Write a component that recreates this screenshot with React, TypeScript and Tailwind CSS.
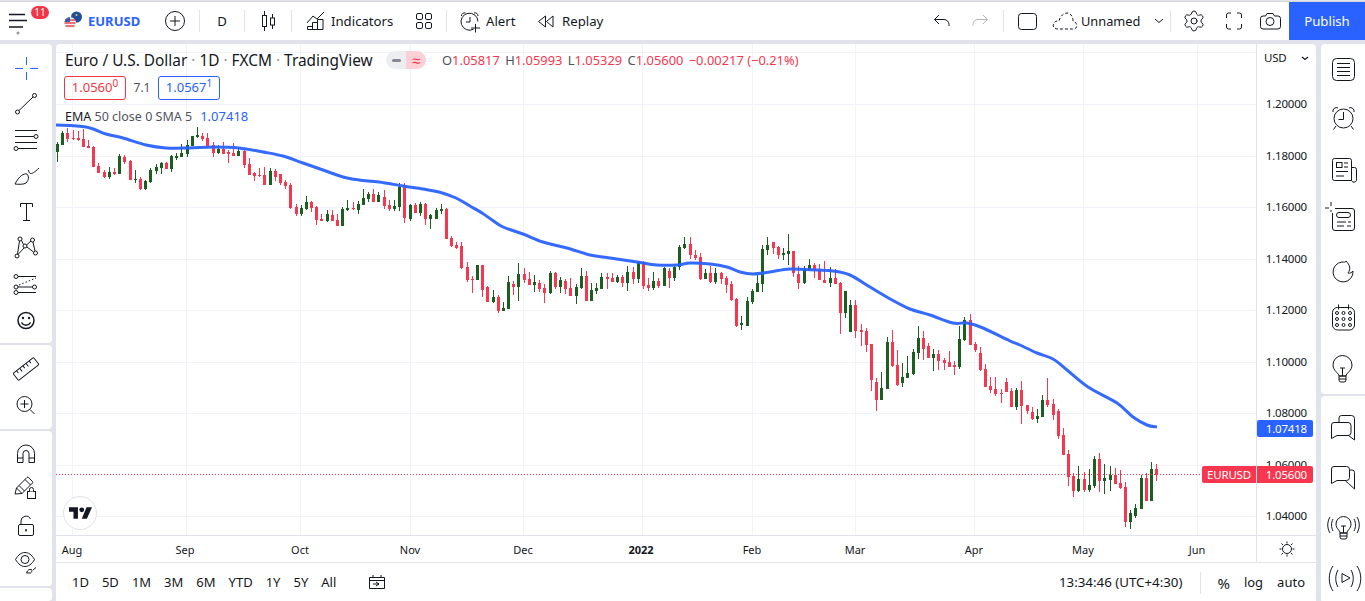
import type { ReactNode } from 'react'
import { Settings } from 'lucide-react'

// [green?, bodyTop, bodyBottom, wickTop, wickBottom], zoomed pixel units (3x)
type C = [number, number, number, number, number]

const seg1: C[] = [
  [1,72,96,66,126],[1,39,75,33,75],[0,39,57,24,66],[0,54,58,30,60],[0,54,60,33,63],[0,57,81,27,81],[0,78,84,60,84],[0,81,141,78,141],
  [0,138,159,129,159],[0,156,171,150,174],[1,156,171,141,177],[0,156,162,144,165],[1,108,162,102,162],[0,111,126,105,132],[0,123,180,120,180],[1,177,180,150,189],
  [0,177,207,171,210],[1,183,207,180,210],[1,150,186,144,189],[1,141,153,132,162],[1,129,144,126,162],[0,129,147,126,147],[1,108,147,105,156],[1,108,114,99,120],
  [1,99,111,72,111],[1,75,102,60,111],[1,48,78,48,78],[1,45,51,21,54],[0,48,57,39,63],[0,54,78,39,78],[0,75,99,66,111],[1,87,99,75,102],
  [0,87,102,66,102],[0,96,102,90,129],[0,99,108,69,108],[1,93,108,81,108],[0,93,135,87,144],[0,132,165,114,165],[0,159,168,156,183],[0,165,168,144,171],
  [0,165,195,141,195],[1,153,195,144,195],[0,153,171,147,183],[0,162,189,162,195],[0,186,198,180,207],[0,195,264,189,267],[0,261,282,252,288],[1,264,282,255,288],
  [1,246,267,228,270],[0,246,264,243,276],[0,261,300,258,315],[0,297,303,282,303],[1,282,303,270,306],[0,285,303,270,303],[0,300,318,282,318],[1,267,318,261,318],
  [1,264,270,240,273],[0,264,267,246,270],[1,252,270,243,282],[1,234,255,207,255],[1,222,237,216,246],[0,222,246,207,246],[1,225,246,216,246],[0,231,258,210,267],
  [0,255,267,240,273],[1,258,267,240,273],[1,201,261,189,273],[0,195,294,189,309],[1,255,297,252,303],[0,255,279,249,279],[1,252,279,246,288],[0,252,297,249,315],
  [1,285,297,282,327],[1,270,297,264,297],[1,267,273,252,282],[0,267,357,264,357],
]
const seg2: C[] = [
  [0,54,78,48,81],[0,75,84,66,87],[0,78,144,66,147],[0,141,180,126,186],[0,177,180,168,219],[1,135,180,135,180],[0,135,210,135,231],[0,201,246,198,246],
  [1,231,246,210,249],[0,231,273,225,279],[1,264,273,246,273],[1,186,267,168,267],[0,192,201,183,225],[1,162,201,129,243],[0,162,180,144,189],[0,177,195,156,195],
  [1,186,195,165,216],[0,189,207,180,216],[0,204,219,192,249],[1,159,219,153,222],[0,159,201,156,207],[1,180,201,171,219],[0,183,207,177,222],[0,204,228,174,228],
  [1,201,228,192,252],[1,168,204,144,207],[0,168,243,153,243],[1,210,243,189,243],[1,204,213,189,222],[1,171,207,159,207],[0,171,177,159,207],[0,174,186,159,186],
  [1,171,186,165,189],[0,171,189,165,201],[1,156,189,138,213],[0,156,177,141,192],[1,126,177,123,189],[0,126,198,123,207],[0,195,204,174,213],[1,183,204,156,210],
  [0,183,198,174,204],[1,144,198,141,198],[0,153,174,144,204],[1,141,174,135,183],[1,81,141,75,150],[1,72,84,51,87],[0,72,105,51,117],[0,105,114,90,120],
  [0,111,177,99,180],[1,159,177,147,177],[0,159,186,138,189],[1,159,186,144,192],[0,159,177,156,192],[0,174,195,168,219],[0,192,240,183,243],[0,237,318,234,321],
  [1,309,315,288,330],[1,243,318,231,318],[1,213,246,207,252],[1,189,216,165,216],[1,87,192,75,216],[1,75,90,51,105],[0,66,84,66,102],[0,81,105,78,117],
  [1,99,105,84,120],[1,93,102,42,135],[0,93,159,93,171],[0,162,189,138,207],[1,147,189,138,192],[1,135,150,117,153],[0,135,150,129,174],[0,147,180,132,180],
  [0,180,189,123,189],[1,174,189,141,201],[0,174,192,147,192],[0,189,279,186,342],[1,213,279,213,294],
]
const seg3: C[] = [
  [1,15,96,0,96],[0,15,93,0,114],[0,90,96,72,138],[0,93,135,84,156],[0,132,240,132,273],[0,246,300,234,333],[1,264,300,216,300],[1,126,267,111,267],
  [0,126,198,90,201],[0,195,255,150,258],[1,231,249,189,261],[1,219,234,168,234],[1,156,222,147,225],[1,114,159,78,177],[0,114,147,93,180],[0,138,174,129,174],
  [1,162,174,147,213],[0,162,183,150,210],[0,180,189,174,210],[0,186,201,153,201],[0,195,201,183,225],[1,117,201,78,207],[1,60,120,51,123],[0,60,135,42,135],
  [0,132,150,126,156],[0,159,210,141,213],[0,207,261,192,261],[0,258,270,231,279],[0,267,282,231,288],[0,279,282,267,309],[0,246,276,234,276],[0,273,321,264,321],
  [1,270,321,264,330],[0,270,318,243,372],[0,315,333,315,342],[0,336,357,321,360],[1,348,357,327,369],[1,300,351,285,351],[0,300,315,234,321],[0,312,345,297,360],
  [0,333,408,327,417],[0,405,465,384,465],[0,462,531,450,558],[0,528,573,519,591],[1,537,573,498,576],[0,537,570,516,576],[1,555,570,507,576],[1,477,558,468,564],
  [0,477,543,459,576],[1,534,543,492,582],[1,525,540,498,573],[0,525,552,504,552],[0,549,564,510,567],[0,561,666,546,681],[1,639,666,630,687],[1,624,648,612,654],
  [1,534,627,525,627],[0,534,603,519,603],[1,507,603,486,603],[0,507,525,492,543],
]

const candles = [
  ...seg1.map(c => ({ c, y0: 120 })),
  ...seg2.map(c => ({ c, y0: 220 })),
  ...seg3.map(c => ({ c, y0: 300 })),
]

const emaPts = [[56,125],[86,127],[106,134],[123,138],[146,145],[166,148],[189,148],[213,147],[239,148],[263,152],[283,156],[303,163],[323,170],[343,177],[359,180],[379,182],[403,186],[423,189],[439,192],[456,198],[470,206],[482,213],[492,220],[503,227],[523,234],[543,242],[567,248],[590,255],[610,258],[637,262],[657,265],[677,265],[690,263],[710,264],[727,267],[740,272],[753,274],[770,272],[790,269],[817,270],[833,271],[850,275],[870,287],[892,300],[910,309],[930,315],[953,323],[967,323],[983,328],[1010,341],[1020,345],[1037,353],[1053,359],[1067,370],[1088,387],[1117,403],[1133,417],[1147,425],[1157,427]]

// catmull-rom through the points so the line has no corners
function smooth(pts: number[][]) {
  let d = `M${pts[0][0]} ${pts[0][1]}`
  for (let i = 0; i < pts.length - 1; i++) {
    const p0 = pts[i - 1] ?? pts[i]
    const p1 = pts[i]
    const p2 = pts[i + 1]
    const p3 = pts[i + 2] ?? p2
    d += `C${p1[0] + (p2[0] - p0[0]) / 6} ${p1[1] + (p2[1] - p0[1]) / 6} ${p2[0] - (p3[0] - p1[0]) / 6} ${p2[1] - (p3[1] - p1[1]) / 6} ${p2[0]} ${p2[1]}`
  }
  return d
}

const gridY = [52, 104, 156, 207, 259, 310, 362, 413, 465, 516]
const gridX = [72, 186, 300, 410, 523, 642, 752, 855, 974, 1083, 1197]
const prices = ['1.20000', '1.18000', '1.16000', '1.14000', '1.12000', '1.10000', '1.08000', '1.06000', '1.04000']
const months = [['Aug', 72], ['Sep', 185], ['Oct', 300], ['Nov', 410], ['Dec', 523], ['2022', 641], ['Feb', 752], ['Mar', 855], ['Apr', 974], ['May', 1083], ['Jun', 1197]] as const
const periods = ['1D', '5D', '1M', '3M', '6M', 'YTD', '1Y', '5Y', 'All']

// icon drawn in page coordinates, cx/cy is the middle of its box
function Ico({ cx, cy, w = 36, h = 36, color = '#131722', children }: { cx: number; cy: number; w?: number; h?: number; color?: string; children: ReactNode }) {
  return (
    <svg width={w} height={h} viewBox={`${cx - w / 2} ${cy - h / 2} ${w} ${h}`} fill="none" stroke={color} strokeWidth={1} className="shrink-0 overflow-visible">
      {children}
    </svg>
  )
}

function Sep() {
  return <div className="h-[22px] w-px shrink-0 bg-[#e0e3eb]" />
}

function Btn({ w, children }: { w: string; children: ReactNode }) {
  return <div className={`flex h-full shrink-0 items-center justify-center ${w}`}>{children}</div>
}

function TopBar() {
  return (
    <div className="flex h-[39px] items-center border-t border-[#d6d6d6] bg-white text-[13.2px] text-[#131722]">
      <div className="relative h-full w-[52px] shrink-0">
        <Ico cx={26} cy={20}>
          <path d="M17 14.5H33M17 20.5H35M17 27H31" strokeWidth={1.5} />
          <circle cx={26} cy={33} r={1.5} fill="#9598a1" stroke="none" />
        </Ico>
        <span className="absolute left-[31px] top-[4px] flex h-[13px] w-[18px] items-center justify-center rounded-full bg-[#f23645] text-[10px] text-white">11</span>
      </div>
      <div className="flex h-full w-[98px] shrink-0 items-center gap-[6px] pl-[12px]">
        <Ico cx={73} cy={21} w={18} h={18}>
          <circle cx={76.5} cy={17} r={5.5} fill="#1f4e9c" stroke="none" />
          <circle cx={76.5} cy={15} r={1} fill="#f6c945" stroke="none" />
          <circle cx={70} cy={23} r={6} fill="#f0f0f0" stroke="none" />
          <path d="M65 20h10M64.5 23h11M65.5 26h9" stroke="#e5484d" strokeWidth={1.5} />
          <path d="M64.5 22a6 6 0 0 1 5.5-5v5z" fill="#3b5aa8" stroke="none" />
        </Ico>
        <span className="pt-[2px] text-[13px] font-bold text-[#2962ff]">EURUSD</span>
      </div>
      <Btn w="w-[49px]">
        <Ico cx={175} cy={21}>
          <circle cx={175} cy={21} r={9.5} />
          <path d="M175 16v10M170 21h10" />
        </Ico>
      </Btn>
      <Sep />
      <Btn w="w-[44px]"><span className="pt-[2px]">D</span></Btn>
      <Sep />
      <Btn w="w-[46px]">
        <Ico cx={268} cy={21}>
          <path d="M264.5 11v4M264.5 27v4M272.5 14v4M272.5 25v4" />
          <rect x={262.5} y={15.5} width={4} height={11} />
          <rect x={270.5} y={18} width={4} height={7} />
        </Ico>
      </Btn>
      <Sep />
      <div className="flex h-full w-[111px] shrink-0 items-center gap-[5px] pl-[14px]">
        <Ico cx={316} cy={21} w={20} h={24}>
          <path d="M307 23l6-7 4 3 7-7" />
          <path d="M307.5 29.5v-3h5v3zM312.5 29.5v-7h5v7zM317.5 29.5v-10h5.5v10z" />
        </Ico>
        <span className="pt-[2px]">Indicators</span>
      </div>
      <Btn w="w-[43px]">
        <Ico cx={424} cy={21}>
          <rect x={415.5} y={13.5} width={6} height={6} rx={1.5} />
          <rect x={424.5} y={13.5} width={6} height={6} rx={1.5} />
          <rect x={415.5} y={22.5} width={6} height={6} rx={1.5} />
          <rect x={424.5} y={22.5} width={6} height={6} rx={1.5} />
        </Ico>
      </Btn>
      <Sep />
      <div className="flex h-full w-[83px] shrink-0 items-center gap-[5px] pl-[12px]">
        <Ico cx={470} cy={21} w={22} h={24}>
          <path d="M473.5 29.2A8.5 8.5 0 1 1 478 21.5" />
          <path d="M461.5 16a3 3 0 0 1 4-3M474 13a3 3 0 0 1 4 3M470 17v5h-4" />
          <path d="M475.5 24v8.5M471 28h9" />
        </Ico>
        <span className="pt-[2px]">Alert</span>
      </div>
      <div className="flex h-full w-[85px] shrink-0 items-center gap-[8px] pl-[8px]">
        <Ico cx={547} cy={21} w={16} h={14}>
          <path d="M546.5 16l-7 5.5 7 5.5zM554 16l-6.5 5.5 6.5 5.5z" />
        </Ico>
        <span className="pt-[2px]">Replay</span>
      </div>
      <div className="flex-1" />
      <Btn w="w-[40px]">
        <Ico cx={941} cy={21}>
          <path d="M949 26v-1.5a5 5 0 0 0-5-5h-9.5M939 15l-4.5 4.5 4.5 4.5" />
        </Ico>
      </Btn>
      <Btn w="w-[42px]">
        <Ico cx={982} cy={21} color="#b2b5be">
          <path d="M973 26v-1.5a5 5 0 0 1 5-5h9.5M983 15l4.5 4.5-4.5 4.5" />
        </Ico>
      </Btn>
      <Sep />
      <Btn w="w-[46px]">
        <Ico cx={1027} cy={21}>
          <rect x={1018.5} y={13.5} width={18} height={16} rx={3} />
        </Ico>
      </Btn>
      <div className="flex h-full w-[120px] shrink-0 items-center pl-[2px]">
        <Ico cx={1065} cy={21} w={26} h={20}>
          <path d="M1058 29c-4 0-6-3-4-6 1-2 3-2 5-2 1-5 5-8 8-8 4 0 6 4 6 8 3 1 5 4 3 7-1 1-2 1-3 1z" strokeDasharray="3 2" />
        </Ico>
        <span className="ml-[3px] pt-[2px] text-[12.8px]">Unnamed</span>
        <svg width={10} height={6} viewBox="0 0 10 6" fill="none" stroke="#131722" className="ml-[14px]"><path d="M1 1l4 3.5L9 1" /></svg>
      </div>
      <Sep />
      <Btn w="w-[46px]">
        <Settings size={24} strokeWidth={1} color="#131722" />
      </Btn>
      <Btn w="w-[33px]">
        <Ico cx={1232} cy={21} w={20} h={20}>
          <path d="M1224.5 18v-3a2 2 0 0 1 2-2h2.5M1235 13h2.5a2 2 0 0 1 2 2v3M1239.5 24v3a2 2 0 0 1-2 2H1235M1229 29h-2.5a2 2 0 0 1-2-2v-3" />
        </Ico>
      </Btn>
      <Btn w="w-[39px]">
        <Ico cx={1269.5} cy={21} w={24} h={20}>
          <path d="M1265 16l1.5-2.5h6l1.5 2.5h3.5a2.5 2.5 0 0 1 2.5 2.5v8a2.5 2.5 0 0 1-2.5 2.5h-15a2.5 2.5 0 0 1-2.5-2.5v-8a2.5 2.5 0 0 1 2.5-2.5z" />
          <circle cx={1269.5} cy={21.5} r={4} />
        </Ico>
      </Btn>
      <div className="flex h-full w-[76px] shrink-0 items-center justify-center bg-[#2962ff] pt-[2px] text-white">Publish</div>
    </div>
  )
}

function LeftTool({ cy, color, children }: { cy: number; color?: string; children: ReactNode }) {
  return (
    <div className="flex h-[36px] items-center justify-center">
      <Ico cx={26} cy={cy} color={color}>{children}</Ico>
    </div>
  )
}

function LeftBar() {
  return (
    <div className="flex w-[52px] shrink-0 flex-col gap-[2px]">
      <div className="h-[299px] rounded-r bg-white pt-[6px]">
        <LeftTool cy={68} color="#2962ff">
          <path d="M15 68.5h8M30 68.5h8M26.5 57v8M26.5 72v8" />
        </LeftTool>
        <LeftTool cy={104}>
          <circle cx={17.5} cy={112} r={2} />
          <circle cx={34.5} cy={95.5} r={2} />
          <path d="M19 110.5L33 97" />
        </LeftTool>
        <LeftTool cy={140}>
          <path d="M15 130.5h22M15 136.5h19M15 142.5h22M18 148.5h19" />
          <circle cx={36} cy={136.5} r={2} />
          <circle cx={16} cy={148.5} r={2} />
        </LeftTool>
        <LeftTool cy={176}>
          <path d="M15 184c4-8 9-11 12-10 2 2 2 6-1 9-2 1.5-8 1.5-11 1zM28.5 170c.5 5 3.5 5 10.5-2" />
        </LeftTool>
        <LeftTool cy={212}>
          <path d="M20.5 207v-3.5h12v3.5M26.5 203.5v17M23 220.5h7" />
        </LeftTool>
        <LeftTool cy={248}>
          <circle cx={20} cy={239} r={2} />
          <circle cx={32.5} cy={240} r={2} />
          <circle cx={25} cy={246} r={2} />
          <circle cx={17} cy={256} r={2} />
          <circle cx={35.5} cy={253} r={2} />
          <path d="M19.5 241l-2 13M21.5 240.5l2 4M26.5 245l4.5-4M33 242l2 9M24 248l-6 6.5M27 247l6.5 5" />
        </LeftTool>
        <LeftTool cy={284}>
          <circle cx={16} cy={276.5} r={2} />
          <circle cx={16} cy={287} r={2} />
          <circle cx={34.5} cy={287} r={2} />
          <circle cx={16} cy={292.5} r={2} />
          <path d="M18 276.5h18M18 287h14.5M18 292.5h18" />
          <path d="M19 285l17-7" strokeDasharray="1.5 2" />
        </LeftTool>
        <LeftTool cy={320}>
          <circle cx={26} cy={320.5} r={8} strokeWidth={1.5} />
          <circle cx={23} cy={318} r={1.2} fill="#131722" stroke="none" />
          <circle cx={29} cy={318} r={1.2} fill="#131722" stroke="none" />
          <path d="M21.5 322.5c2 3.5 7 3.5 9 0" strokeWidth={1.5} />
        </LeftTool>
      </div>
      <div className="h-[84px] rounded-r bg-white pt-[7px]">
        <LeftTool cy={370}>
          <g transform="rotate(-38 26 369)">
            <rect x={13} y={364.5} width={26} height={9} rx={1} />
            <path d="M17.5 364.5v3M21.5 364.5v4M25.5 364.5v3M29.5 364.5v4M33.5 364.5v3" />
          </g>
        </LeftTool>
        <div className="-mt-[2px]">
          <LeftTool cy={404}>
            <circle cx={24.5} cy={404} r={7.5} />
            <path d="M24.5 400v8M20.5 404h8M30 409.5l4.5 4.5" />
          </LeftTool>
        </div>
      </div>
      <div className="h-[155px] rounded-r bg-white pt-[6px]">
        <LeftTool cy={455}>
          <path d="M17.5 462.5v-9a8.5 8.5 0 0 1 17 0v9H29v-9a3 3 0 0 0-6 0v9zM17.5 458h5.5M29 458h5.5" />
        </LeftTool>
        <LeftTool cy={491}>
          <path d="M15 494l1.5-6L27 477.5a1 1 0 0 1 1.5 0l4 4a1 1 0 0 1 0 1.5L22 493.500zM16.5 488l5.5 5.500M19 485.500l5.5 5.500M25 479.500l5.5 5.500" />
          <rect x={27.5} y={491.5} width={8} height={7} fill="#fff" />
          <path d="M29.5 491.500v-2a2 2 0 0 1 4 0v2" fill="#fff" />
        </LeftTool>
        <LeftTool cy={527}>
          <rect x={18.5} y={524.5} width={15} height={11} rx={1.5} />
          <path d="M21 524.5v-3.5a5 5 0 0 1 9.5-2" />
          <path d="M26 529v2.5" strokeWidth={1.5} />
        </LeftTool>
        <LeftTool cy={562}>
          <path d="M15.5 558.5c3-5 6-7 9.5-7s6.5 2 9.5 7c-3 5-6 7-9.5 7s-6.5-2-9.5-7z" />
          <circle cx={25} cy={558.5} r={4} />
          <path d="M26.5 572c1-3 3-4 5-3.500 1 1 0 3-1 3.500zM33 569l3-2.500" />
        </LeftTool>
      </div>
      <div className="flex-1 rounded-r bg-white" />
    </div>
  )
}

function RightTool({ cy, children }: { cy: number; children: ReactNode }) {
  return (
    <div className="flex h-[50px] items-center justify-center">
      <Ico cx={1343} cy={cy} w={36} h={36}>{children}</Ico>
    </div>
  )
}

function RightBar() {
  return (
    <div className="flex w-[44px] shrink-0 flex-col gap-[2px]">
      <div className="h-[355px] rounded-l bg-white">
        <RightTool cy={69}>
          <rect x={1332.5} y={58.5} width={22} height={22} rx={4} />
          <path d="M1337 63.5h13M1337 67.5h13M1337 71.5h13M1337 75.5h13" />
        </RightTool>
        <RightTool cy={119}>
          <circle cx={1343.5} cy={118.5} r={9.5} />
          <path d="M1343.5 112v7.5h-5M1333 112a3.5 3.5 0 0 1 5-4M1349 108a3.5 3.5 0 0 1 5 4M1336 126l-2.5 3.5M1351 126l2.5 3.5" />
        </RightTool>
        <RightTool cy={169}>
          <path d="M1351.5 180.5h-17a2 2 0 0 1-2-2v-18a2 2 0 0 1 2-2h15a2 2 0 0 1 2 2zM1351.5 167.5h3a2 2 0 0 1 2 2v9a2.5 2.5 0 0 1-5 2" />
          <rect x={1336.5} y={162.5} width={5.5} height={5} />
          <path d="M1344 163h4M1344 167h4M1336 171.5h12M1336 176h8" />
        </RightTool>
        <RightTool cy={219}>
          <path d="M1335 208.5h17a2.5 2.5 0 0 1 2.5 2.5v17a2.5 2.5 0 0 1-2.5 2.5h-17a2.5 2.5 0 0 1-2.5-2.5V213" />
          <rect x={1336.5} y={212.5} width={14} height={5} rx={2.5} />
          <path d="M1337 222h9M1348 222h3M1337 226h7M1347 226h4" />
          <path d="M1331 202v4M1331 210v2M1325 208h4" />
        </RightTool>
        <RightTool cy={269}>
          <path d="M1342 262a10 10 0 1 0 11 9c-1 1-3 3-5 2 3-4 2-8-2-12-1 2-2 1-4 1z" />
        </RightTool>
        <RightTool cy={319}>
          <rect x={1332.5} y={307.5} width={22} height={22.5} rx={5} />
          <path d="M1338.5 304.5v5M1348.5 304.5v5" />
          {[1337, 1343.5, 1350].flatMap(x => [313, 319, 325].map(y => (
            <circle key={`${x}-${y}`} cx={x} cy={y} r={1.5} />
          )))}
        </RightTool>
        <RightTool cy={369}>
          <path d="M1339 376c0-3-6-5-6-11a9.5 9.5 0 0 1 19 0c0 6-6 8-6 11z" />
          <path d="M1339 376h7v4a2 2 0 0 1-2 2h-3a2 2 0 0 1-2-2zM1339 379h7M1340 368h5M1342.5 368v8" />
        </RightTool>
      </div>
      <div className="flex-1 rounded-l bg-white pt-[7px]">
        <RightTool cy={433}>
          <path d="M1334 427.5h14a3 3 0 0 1 3 3v7a3 3 0 0 1-3 3h-11l-5.5 3v-13.5a2.5 2.5 0 0 1 2.5-2.5z" />
          <path d="M1339 427v-4a2.5 2.5 0 0 1 2.5-2.5h10a3 3 0 0 1 3 3V445l-6-4.5" />
        </RightTool>
        <RightTool cy={483}>
          <path d="M1331.5 488.5V474a2.5 2.5 0 0 1 2.5-2.5h12.5a3 3 0 0 1 3 3v8a3 3 0 0 1-3 3H1337z" />
          <path d="M1350 475h2a2.5 2.5 0 0 1 2.5 2.5V494l-6-5.5-3-2.5" />
        </RightTool>
        <RightTool cy={533}>
          <path d="M1340 538c0-3-4-4-4-9a7.5 7.5 0 0 1 15 0c0 5-4 6-4 9zM1340 538h7v4a2 2 0 0 1-2 2h-3a2 2 0 0 1-2-2zM1340 541h7M1341 531h5M1343.5 531v7" />
          <path d="M1333 524c-2 4-2 8 0 12M1330 522c-3 5-3 11 0 16M1354 524c2 4 2 8 0 12M1357 522c3 5 3 11 0 16" />
        </RightTool>
        <RightTool cy={583}>
          <path d="M1342 578.5v9l8-4.5z" />
          <path d="M1338 575c-3 5-3 12 0 17M1333 571c-5 7-5 18 0 25M1351 575c3 5 3 12 0 17M1357 571c5 7 5 18 0 25" />
        </RightTool>
      </div>
    </div>
  )
}

function ChartSvg() {
  return (
    <svg width={1200} height={491} viewBox="56 44 1200 491" className="block">
      {gridY.map(y => <rect key={y} x={56} y={y} width={1200} height={1} fill="#f0f3fa" />)}
      {gridX.map(x => <rect key={x} x={x} y={44} width={1} height={491} fill="#f0f3fa" />)}
      {candles.map(({ c, y0 }, i) => {
        const x = Math.round(57 + i * 5.185)
        const fill = c[0] ? '#1b5e20' : '#f7374f'
        return (
          <g key={i} fill={fill} shapeRendering="crispEdges">
            <rect x={x} y={y0 + c[3] / 3} width={1} height={(c[4] - c[3]) / 3} />
            <rect x={x - 1} y={y0 + c[1] / 3} width={3} height={(c[2] - c[1]) / 3} />
          </g>
        )
      })}
      <path d="M56 474.5H1202" stroke="#f7374f" strokeDasharray="1 2" fill="none" shapeRendering="crispEdges" />
      <path d={smooth(emaPts)} fill="none" stroke="#2962ff" strokeWidth={3} strokeLinejoin="round" strokeOpacity={0.95} />
    </svg>
  )
}

function Legend() {
  return (
    <div className="absolute left-[9px] top-[6px] text-[#131722]">
      <div className="flex h-[20px] items-center">
        <span className="w-[321px] whitespace-nowrap pt-[2px] text-[15.4px]">
          Euro / U.S. Dollar <span className="text-[#9598a1]">·</span> 1D <span className="text-[#9598a1]">·</span> FXCM <span className="text-[#9598a1]">·</span> TradingView
        </span>
        <div className="flex h-[18px] w-[40px] overflow-hidden rounded-full">
          <span className="flex flex-1 items-center justify-center bg-[#eceef2]"><span className="h-[3px] w-[9px] rounded bg-[#868993]" /></span>
          <span className="flex flex-1 items-center justify-center bg-[#fbd0d8] text-[15px] leading-none text-[#f23645]">≈</span>
        </div>
        <span className="ml-[16px] whitespace-nowrap pt-[2px] text-[12.9px] text-[#f7374f]">
          <span className="text-[#50535e]">O</span>1.05817 <span className="ml-[2px] text-[#50535e]">H</span>1.05993 <span className="ml-[2px] text-[#50535e]">L</span>1.05329 <span className="ml-[2px] text-[#50535e]">C</span>1.05600 <span className="ml-[2px]">−0.00217 (−0.21%)</span>
        </span>
      </div>
      <div className="mt-[6px] flex h-[24px] items-center text-[13px]">
        <span className="-ml-px flex h-[24px] w-[62px] items-center justify-center rounded-[3px] border border-[#f23645] text-[#f23645]">1.0560<sup className="text-[10px]">0</sup></span>
        <span className="w-[32px] text-center text-[12px] text-[#50535e]">7.1</span>
        <span className="flex h-[24px] w-[62px] items-center justify-center rounded-[3px] border border-[#2962ff] text-[#2962ff]">1.0567<sup className="text-[10px]">1</sup></span>
      </div>
      <div className="mt-[6px] flex h-[20px] items-center gap-[8px] whitespace-nowrap pt-[2px] text-[12.5px]">
        <span>EMA <span className="text-[#50535e]">50 close 0 SMA 5</span></span>
        <span className="text-[13px] text-[#2962ff]">1.07418</span>
      </div>
    </div>
  )
}

function PriceScale() {
  return (
    <div className="relative flex w-[60px] shrink-0 flex-col border-l border-[#e0e3eb] text-[11.5px] tracking-[-0.2px] text-[#131722]">
      <div className="flex h-[28px] shrink-0 items-center justify-between pl-[7px] pr-[7px]">
        <span>USD</span>
        <svg width={8} height={5} viewBox="0 0 8 5" fill="none" stroke="#131722" strokeWidth={1.2}><path d="M1 1l3 2.5L7 1" /></svg>
      </div>
      <div className="mt-[6px] flex shrink-0 flex-col">
        {prices.map(p => (
          <div key={p} className="flex h-[51.5px] shrink-0 items-center justify-end pr-[9px]">{p}</div>
        ))}
      </div>
      <div className="absolute left-0 top-[376px] flex h-[17px] w-[56px] items-center justify-end rounded-[2px] bg-[#2962ff] pr-[6px] text-white">1.07418</div>
      <div className="absolute left-0 top-[422px] flex h-[17px] w-[56px] items-center justify-end rounded-r-[2px] bg-[#f7374f] pr-[6px] text-white">1.05600</div>
      <div className="absolute -left-[55px] top-[422px] flex h-[17px] w-[54px] items-center justify-center rounded-l-[2px] bg-[#f7374f] text-white">EURUSD</div>
    </div>
  )
}

export default function App() {
  return (
    <div className="flex h-[601px] w-[1365px] flex-col overflow-hidden bg-[#e0e3eb] pt-px font-['Noto_Sans',sans-serif]">
      <TopBar />
      <div className="mt-[4px] flex min-h-0 flex-1">
        <LeftBar />
        <div className="ml-[4px] flex w-[1260px] shrink-0 flex-col overflow-hidden rounded-t bg-white">
          <div className="flex h-[491px] shrink-0">
            <div className="relative w-[1200px] shrink-0">
              <ChartSvg />
              <Legend />
              <div className="absolute left-[7px] top-[452px] flex h-[34px] w-[34px] items-center justify-center rounded-full border border-[#e0e3eb] bg-white">
                <svg width={23} height={12} viewBox="0 0 36 18" fill="#131722"><path d="M14 18H7V7H0V0h14zM28 18h-8L27.5 0h8.5z" /><circle cx={20} cy={4} r={3.8} /></svg>
              </div>
            </div>
            <PriceScale />
          </div>
          <div className="flex h-[28px] shrink-0 border-y border-[#e0e3eb] text-[11px] text-[#131722]">
            <div className="relative w-[1200px] shrink-0">
              {months.map(([m, x]) => (
                <span key={m} className={`absolute top-[6px] -translate-x-1/2 ${m === '2022' ? 'font-bold' : ''}`} style={{ left: x - 56 }}>{m}</span>
              ))}
            </div>
            <div className="flex flex-1 items-center justify-center border-l border-[#e0e3eb]">
              <Ico cx={1287} cy={549} w={18} h={18}>
                <circle cx={1287} cy={549} r={4.5} />
                <path d="M1287 541.5v2M1287 554.5v2M1279.5 549h2M1292.5 549h2M1281.5 543.5l1.5 1.5M1291 553l1.5 1.5M1292.5 543.5l-1.5 1.5M1283 553l-1.5 1.5" />
              </Ico>
            </div>
          </div>
          <div className="flex flex-1 items-center pl-[16px] pr-[11px] pt-[2px] text-[13px] text-[#131722]">
            <div className="flex gap-[13px]">
              {periods.map(p => <span key={p}>{p}</span>)}
            </div>
            <div className="ml-[30px]">
              <Ico cx={378} cy={583} w={20} h={20}>
                <path d="M371.5 577.5h15v11h-15zM371.5 580.5h15M375 575v3M383 575v3M375 584h6M378 582l3 2-3 2" />
              </Ico>
            </div>
            <span className="ml-auto text-[13.3px]">13:34:46 (UTC+4:30)</span>
            <span className="ml-[18px] h-[22px] w-px bg-[#e0e3eb]" />
            <span className="ml-[16px] text-[15px]">%</span>
            <span className="ml-[14px]">log</span>
            <span className="ml-[14px]">auto</span>
          </div>
        </div>
        <div className="w-[5px] shrink-0" />
        <RightBar />
      </div>
    </div>
  )
}
